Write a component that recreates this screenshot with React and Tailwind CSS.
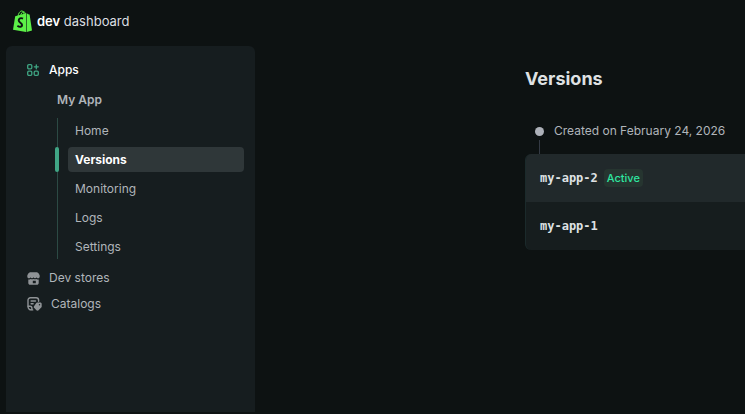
const appLinks = ["Home", "Versions", "Monitoring", "Logs", "Settings"];
const versions = [
  { name: "my-app-2", active: true },
  { name: "my-app-1", active: false },
];

function BagLogo() {
  return (
    <svg viewBox="0 0 19 22" className="h-[22px] w-[19px] shrink-0" aria-hidden="true">
      <path d="M2.200 6.300 13 3.200V22L0 19.700z" fill="#5cf048" />
      <path d="M13.600 3.200l2.300 1.200.700.2L19 20.600 13.600 22z" fill="#5cf048" />
      <path d="M5 6.500C5.300 3.500 7 .9 8.800.9c1.500 0 2.200 1.700 2.200 4M7.700 5.500C8 3.500 9.300 1.800 10.600 1.800c1 0 1.600.9 1.800 2.200" fill="none" stroke="#5cf048" strokeWidth="1" />
      <path d="M10 8.600C7.800 7.500 5.600 8.400 5.700 10.500c.1 2 3.500 2.400 3.400 4.600-.1 1.800-2.400 2.400-4.700.6" fill="none" stroke="#0d1212" strokeWidth="1.900" />
    </svg>
  );
}

function AppsIcon() {
  return (
    <svg viewBox="0 0 12 12" className="size-3 shrink-0" fill="none" stroke="currentColor" strokeWidth="1.3" strokeLinecap="round" aria-hidden="true">
      <rect x="0.7" y="0.7" width="4.100" height="4.100" rx="1.100" />
      <rect x="0.7" y="7.200" width="4.100" height="4.100" rx="1.100" />
      <rect x="7.200" y="7.200" width="4.100" height="4.100" rx="1.100" />
      <path d="M9.300 0.8v4M7.300 2.800h4" />
    </svg>
  );
}

function StoreIcon() {
  return (
    <svg viewBox="0 0 13 13" className="size-[13px] shrink-0" fill="currentColor" aria-hidden="true">
      <path d="M3.800.2h5.400c1.200 0 2.200.6 2.700 1.600l.8 1.800v1.200c0 .9-.7 1.500-1.600 1.500-.8 0-1.400-.4-1.600-1-.3.600-.8 1-1.500 1S6.800 5.900 6.500 5.300c-.3.600-.8 1-1.500 1s-1.200-.4-1.500-1c-.2.600-.8 1-1.600 1C1 6.300.3 5.700.3 4.800V3.600l.8-1.800C1.600.8 2.600.2 3.800.2z" />
      <path fillRule="evenodd" d="M1.300 7.500c.8.100 1.600-.1 2.300-.6.9.6 2 .6 2.900 0 .9.600 2 .6 2.900 0 .7.500 1.500.7 2.300.6V11c0 1-.8 1.800-1.800 1.800H3.100c-1 0-1.800-.8-1.800-1.800zM5.800 8.700v2.600h3V8.700z" />
    </svg>
  );
}

function CatalogIcon() {
  return (
    <svg viewBox="0 0 15 14" className="h-3.5 w-[15px] shrink-0" fill="none" stroke="currentColor" strokeWidth="1.400" strokeLinecap="round" strokeLinejoin="round" aria-hidden="true">
      <path d="M5.700 12.900H4.300A3.300 3.300 0 0 1 1 9.600V3.200A2.400 2.400 0 0 1 3.400.8h5.800a2.400 2.400 0 0 1 2.400 2.400v1" />
      <path d="M4.100 4h4.400M4.100 6.700h2M1.200 9.300h1.700a2 2 0 0 1 2 2v1.300" />
      <path fill="currentColor" stroke="none" fillRule="evenodd" d="M10.300 5.500h3c.8 0 1.400.6 1.400 1.400v2.500c0 .5-.2.900-.5 1.200l-2.600 2.600c-.6.6-1.600.6-2.200 0l-2.100-2.100c-.6-.6-.7-1.500-.1-2.200l2.100-2.900c.2-.3.600-.5 1-.5zM12.500 7a.7.7 0 1 0 0 1.400.7.7 0 0 0 0-1.400z" />
    </svg>
  );
}

export default function App() {
  return (
    <div className="flex min-h-screen flex-col overflow-hidden bg-[#0d1212] pb-0.5 font-['Inter',sans-serif] text-[12px] leading-4 text-[#b0b5ba]">
      <header className="flex h-[46px] items-center gap-[5px] px-[13px] pb-1">
        <BagLogo />
        <p className="text-[13px] text-[#dcdfe1]">
          <span className="font-semibold text-white">dev</span> dashboard
        </p>
      </header>

      <div className="flex grow">
        <aside className="w-[249px] shrink-0 ml-1.5 rounded-t-md bg-[#161d1f] pt-3 pl-[21px] pr-[11px]">
          <nav aria-label="Main">
            <a href="#apps" className="flex h-6 items-center gap-2.5 font-medium text-white">
              <span className="text-[#3fa583]"><AppsIcon /></span>
              Apps
            </a>
            <a href="#my-app" className="mt-1.5 ml-[30px] flex h-6 items-center font-semibold">My App</a>
            <ul className="mt-1.5 ml-[30px] flex flex-col gap-1 border-l border-[#2c4a44] pl-2.5">
              {appLinks.map((label) => {
                const current = label === "Versions";
                return (
                  <li key={label} className="relative">
                    {current && <span className="absolute inset-y-0 -left-[13px] w-1 rounded-xs bg-[#40a585]" />}
                    <a
                      href={`#${label.toLowerCase()}`}
                      aria-current={current ? "page" : undefined}
                      className={`flex h-[25px] items-center rounded-sm px-[7px] ${current ? "bg-[#2f3739] font-bold text-white" : ""}`}
                    >
                      {label}
                    </a>
                  </li>
                );
              })}
            </ul>
            <a href="#dev-stores" className="mt-[7px] flex h-6 items-center gap-[9px]">
              <span className="text-[#8f9396]"><StoreIcon /></span>
              Dev stores
            </a>
            <a href="#catalogs" className="mt-0.5 flex h-6 items-center gap-[9px]">
              <span className="text-[#8f9396]"><CatalogIcon /></span>
              Catalogs
            </a>
          </nav>
        </aside>

        <main className="min-w-0 grow pt-[21px] pl-[270px]">
          <h1 className="text-[18px] leading-6 font-bold text-[#dfe1e3]">Versions</h1>
          <section className="mt-[31px]">
            <div className="flex h-[18px] items-center gap-2.5 pl-2.5">
              <span className="size-[9px] shrink-0 rounded-full bg-[#adb1b9]" />
              <h2 className="whitespace-nowrap">Created on February 24, 2026</h2>
            </div>
            <div className="ml-3.5 h-3.5 w-px bg-[#343a44]" />
            <ul className="overflow-hidden rounded-l-md border-l border-[#1b2a2b] bg-[#161d1e]">
              {versions.map((v) => (
                <li key={v.name} className={`flex h-12 items-center gap-1.5 px-3.5 ${v.active ? "bg-[#21292b]" : ""}`}>
                  <a href={`#${v.name}`} className="font-['DejaVu_Sans_Mono',monospace] font-bold text-[#dfe1e3]">{v.name}</a>
                  {v.active && (
                    <span className="rounded-sm bg-[#263530] px-[3px] py-px text-[11px] font-medium text-[#2ee6a0]">Active</span>
                  )}
                </li>
              ))}
            </ul>
          </section>
        </main>
      </div>
    </div>
  );
}
